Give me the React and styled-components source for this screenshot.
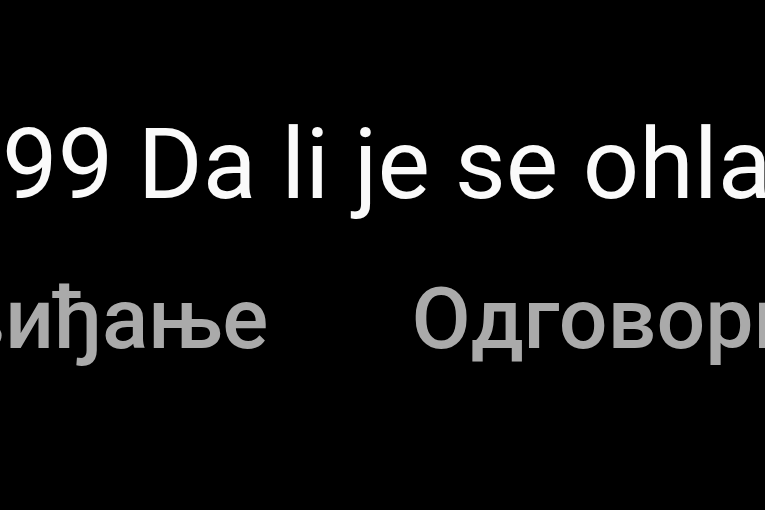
import styled, { createGlobalStyle } from "styled-components";

const GlobalStyle = createGlobalStyle`
    html, body {
        margin: 0;
        padding: 0;
        background: #000;
    }
    body {
        font-family: Roboto, "Noto Sans", "Liberation Sans", sans-serif;
    }
`;

const Screen = styled.div`
    width: 765px;
    height: 510px;
    background: #000;
    overflow: hidden;
    padding-top: 104px;
    box-sizing: border-box;
`;

const Body = styled.p`
    margin: 0 0 0 ${(p) => p.$shift}px;
    font-size: 99px;
    line-height: 120px;
    color: #fafafa;
    white-space: nowrap;
`;

const Actions = styled.div`
    display: flex;
    gap: 143px;
    margin-top: 45px;
    margin-left: ${(p) => p.$shift}px;
`;

const Action = styled.span`
    font-size: 86px;
    line-height: 100px;
    font-weight: 500;
    color: #aaaaaa;
    white-space: nowrap;
`;

const App = () => {
    return (
        <>
            <GlobalStyle />
            <Screen>
                <Body $shift={2}>99 Da li je se ohladio</Body>
                <Actions $shift={-100}>
                    <Action>Свиђање</Action>
                    <Action>Одговори</Action>
                </Actions>
            </Screen>
        </>
    );
};

export default App;
